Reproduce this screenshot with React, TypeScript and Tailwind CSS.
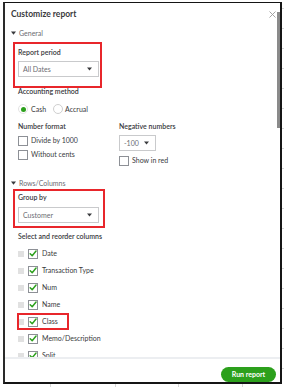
import React from "react";

const Check = () => (
  <span className="w-[10px] h-[10px] border border-[#8d9096] bg-white flex items-center justify-center shrink-0">
    <svg width="9" height="9" viewBox="0 0 10 10">
      <polyline points="1.5,5.2 4,7.8 8.8,1.8" fill="none" stroke="#2ca01c" strokeWidth="1.8" strokeLinecap="round" strokeLinejoin="round" />
    </svg>
  </span>
);

const Box = () => <span className="w-[10px] h-[10px] border border-[#8d9096] bg-white shrink-0" />;

const Caret = () => (
  <svg width="5" height="4" viewBox="0 0 5 4" className="shrink-0">
    <polygon points="0,0.5 5,0.5 2.5,3.5" fill="#393a3d" />
  </svg>
);

const Handle = () => (
  <svg width="6" height="6" viewBox="0 0 6 6" className="shrink-0">
    <rect x="0" y="0.5" width="6" height="1" fill="#c4c4c4" />
    <rect x="0" y="2.5" width="6" height="1" fill="#c4c4c4" />
    <rect x="0" y="4.5" width="6" height="1" fill="#c4c4c4" />
  </svg>
);

const Select = ({ value, w }: { value: string; w: string }) => (
  <div className={`${w} h-[16px] border border-[#c9cacc] bg-white flex items-center justify-between pl-[4px] pr-[6px]`}>
    <span className="text-[7px] text-[#6b6c72]">{value}</span>
    <Caret />
  </div>
);

const Section = ({ label }: { label: string }) => (
  <div className="h-[10px] flex items-center gap-[3px]">
    <svg width="5" height="4" viewBox="0 0 5 4">
      <polygon points="0,0.5 5,0.5 2.5,3.8" fill="#393a3d" />
    </svg>
    <span className="text-[7px] text-[#6b6c72]">{label}</span>
  </div>
);

const cols = ["Date", "Transaction Type", "Num", "Name", "Class", "Memo/Description", "Split"];

export default function App() {
  return (
    <div className="w-[284px] h-[387px] bg-white relative overflow-hidden pt-[2px] pl-[3px]" style={{ fontFamily: "Lato, 'Open Sans', sans-serif" }}>
      {[8, 28, 48, 68, 88, 108, 128, 148, 168, 188, 208, 228, 248, 268, 288, 308, 328, 348, 368].map((y) => (
        <div key={y} className="absolute left-[282px] w-[2px] h-[1px] bg-[#d6d6d6]" style={{ top: y }} />
      ))}
      {[50, 115, 178, 242].map((x) => (
        <div key={x} className="absolute top-[384px] w-[1px] h-[3px] bg-[#d6d6d6]" style={{ left: x }} />
      ))}
      <div className="w-[279px] h-[382px] border-t border-l-2 border-r-2 border-b-2 border-[#151515] border-l-[#2a2a2a] flex flex-col bg-white">
        <div className="h-[354px] overflow-hidden relative pl-[6px] text-[#393a3d]">
          <div className="absolute right-0 top-[9px] w-[3px] h-[116px] bg-[#8a8a8a]" />
          <div className="absolute left-[8px] top-[39px] w-[89px] h-[46px] border-2 border-[#e8262b]" />
          <div className="absolute left-[8px] top-[186px] w-[92px] h-[39px] border-2 border-[#e8262b]" />
          <div className="absolute left-[12px] top-[310px] w-[52px] h-[17px] border-2 border-[#e8262b]" />

          <div className="mt-[5px] h-[13px] flex items-center justify-between pr-[4px]">
            <span className="text-[8.5px] font-bold text-[#393a3d]">Customize report</span>
            <svg width="7" height="7" viewBox="0 0 7 7">
              <path d="M0.5 0.5 L6.5 6.5 M6.5 0.5 L0.5 6.5" stroke="#9a9a9a" strokeWidth="0.9" />
            </svg>
          </div>
          <div className="mt-[7px]">
            <Section label="General" />
          </div>
          <div className="pl-[7px] flex flex-col">
            <div className="mt-[9px] h-[10px] flex items-center text-[7px] font-semibold">Report period</div>
            <div className="mt-[4px]">
              <Select value="All Dates" w="w-[81px]" />
            </div>
            <div className="mt-[9px] h-[10px] flex items-center text-[7px] font-semibold">Accounting method</div>
            <div className="mt-[7px] h-[12px] flex items-center text-[7px]">
              <span className="w-[10px] h-[10px] rounded-full border border-[#e3e3e3] flex items-center justify-center">
                <span className="w-[5px] h-[5px] rounded-full bg-[#2ca01c]" />
              </span>
              <span className="ml-[3px]">Cash</span>
              <span className="ml-[7px] w-[10px] h-[10px] rounded-full border border-[#cfcfcf]" />
              <span className="ml-[2px]">Accrual</span>
            </div>
            <div className="mt-[6px] flex">
              <div className="w-[101px] flex flex-col">
                <div className="h-[10px] flex items-center text-[7px] font-semibold">Number format</div>
                <div className="mt-[4px] h-[11px] flex items-center gap-[3px] text-[7px]">
                  <Box />
                  <span>Divide by 1000</span>
                </div>
                <div className="mt-[3px] h-[11px] flex items-center gap-[3px] text-[7px]">
                  <Box />
                  <span>Without cents</span>
                </div>
              </div>
              <div className="flex flex-col">
                <div className="h-[10px] flex items-center text-[7px] font-semibold">Negative numbers</div>
                <div className="mt-[4px]">
                  <Select value="-100" w="w-[37px]" />
                </div>
                <div className="mt-[4px] h-[11px] flex items-center gap-[3px] text-[7px]">
                  <Box />
                  <span>Show in red</span>
                </div>
              </div>
            </div>
          </div>
          <div className="mt-[12px]">
            <Section label="Rows/Columns" />
          </div>
          <div className="pl-[7px] flex flex-col">
            <div className="mt-[4px] h-[10px] flex items-center text-[7px] font-semibold">Group by</div>
            <div className="mt-[5px]">
              <Select value="Customer" w="w-[81px]" />
            </div>
            <div className="mt-[8px] h-[10px] flex items-center text-[7px] font-semibold">Select and reorder columns</div>
            <div className="mt-[4px] flex flex-col">
              {cols.map((c) => (
                <div key={c} className="h-[17px] flex items-center text-[7px]">
                  <Handle />
                  <span className="ml-[4px]">
                    <Check />
                  </span>
                  <span className="ml-[4px]">{c}</span>
                </div>
              ))}
            </div>
          </div>
        </div>
        <div className="h-[2px] bg-[#eceef1]" />
        <div className="flex-1 flex justify-end items-start pt-[8px] pr-[4px]">
          <button className="w-[55px] h-[15px] rounded-full bg-[#2ca01c] text-white text-[7px] font-bold flex items-center justify-center">
            Run report
          </button>
        </div>
      </div>
    </div>
  );
}
